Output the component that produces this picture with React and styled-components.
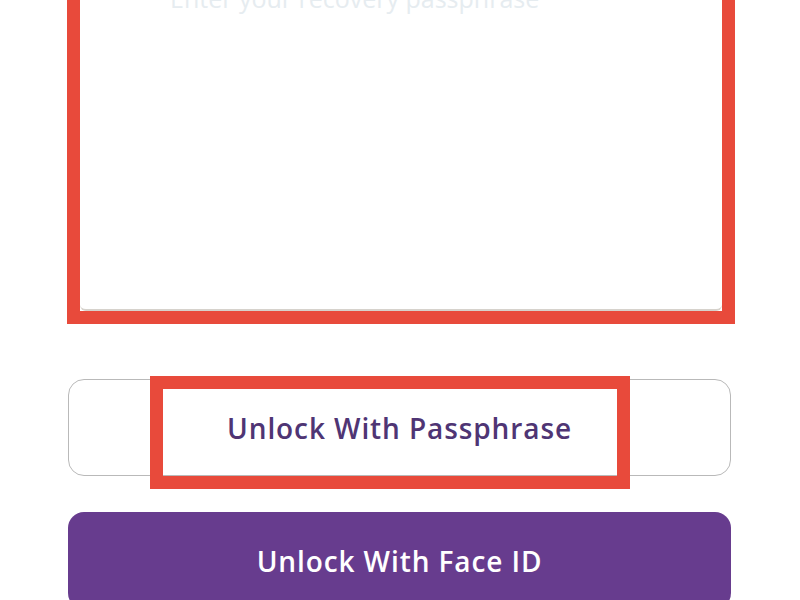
import React from "react";
import styled, { createGlobalStyle } from "styled-components";

const GlobalStyle = createGlobalStyle`
	html, body {
		margin: 0;
		padding: 0;
		background: #ffffff;
		overflow: hidden;
	}
	body {
		font-family: "Open Sans", "Lato", sans-serif;
	}
`;

const Screen = styled.div`
	width: 800px;
	height: 600px;
	overflow: hidden;
	box-sizing: border-box;
	padding: 0 69px 0 68px;
	display: flex;
	flex-direction: column;
`;

// ANCHOR red highlight around the passphrase field
const Highlight = styled.div`
	flex-shrink: 0;
	margin-top: -260px;
	margin-right: -4px;
	margin-left: -1px;
	border: 13px solid #e84a3b;
	height: 584px;
	box-sizing: border-box;
	display: flex;
`;

const Field = styled.div`
	flex: 1;
	background: #ffffff;
	border-bottom: 2px solid #d6d2cc;
	border-radius: 0 0 6px 6px;
	padding: 0 90px;
	font-size: 25px;
	color: #e6ecf0;
	line-height: 1;
`;

const Placeholder = styled.div`
	margin-top: 233px;
`;

const Buttons = styled.div`
	flex-shrink: 0;
	display: flex;
	flex-direction: column;
	gap: 36px;
	margin-top: 55px;
`;

const Button = styled.div`
	position: relative;
	flex-shrink: 0;
	height: 97px;
	box-sizing: border-box;
	border-radius: 16px;
	display: flex;
	align-items: center;
	justify-content: center;
	font-size: 28px;
	font-weight: 600;
	letter-spacing: 0.9px;
	border: ${(p) => (p.$filled ? "none" : "1.5px solid #b9b9b9")};
	background: ${(p) => (p.$filled ? "#673c8e" : "#ffffff")};
	color: ${(p) => (p.$filled ? "#ffffff" : "#4f3574")};
`;

const Label = styled.span`
	position: relative;
	z-index: 1;
`;

const Marker = styled.div`
	position: absolute;
	left: 81px;
	top: -4px;
	width: 480px;
	height: 113px;
	box-sizing: border-box;
	border: 13px solid #e84a3b;
`;

const App = () => {
	return (
		<>
			<GlobalStyle />
			<Screen>
				<Highlight>
					<Field>
						<Placeholder>Enter your recovery passphrase</Placeholder>
					</Field>
				</Highlight>
				<Buttons>
					<Button>
						<Marker />
						<Label>Unlock With Passphrase</Label>
					</Button>
					<Button $filled>
						<Label>Unlock With Face ID</Label>
					</Button>
				</Buttons>
			</Screen>
		</>
	);
};
export default App;
